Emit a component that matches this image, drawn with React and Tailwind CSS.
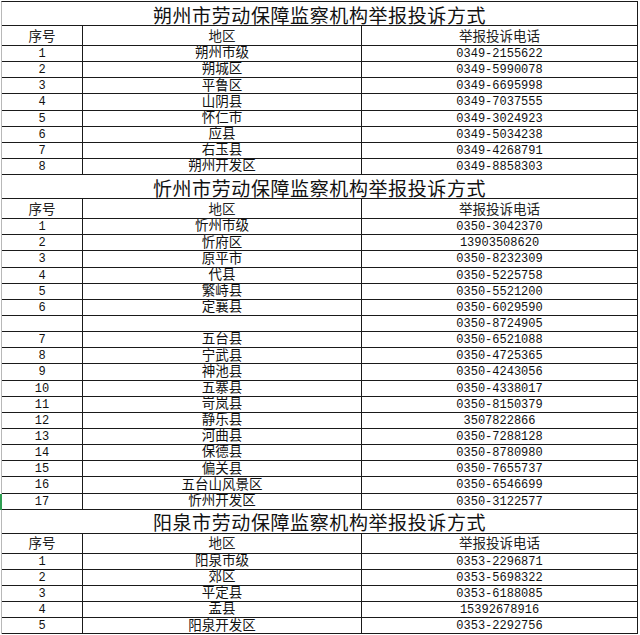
const sections = [
  {
    title: "朔州市劳动保障监察机构举报投诉方式",
    rows: [
      ["1", "朔州市级", "0349-2155622"],
      ["2", "朔城区", "0349-5990078"],
      ["3", "平鲁区", "0349-6695998"],
      ["4", "山阴县", "0349-7037555"],
      ["5", "怀仁市", "0349-3024923"],
      ["6", "应县", "0349-5034238"],
      ["7", "右玉县", "0349-4268791"],
      ["8", "朔州开发区", "0349-8858303"],
    ],
  },
  {
    title: "忻州市劳动保障监察机构举报投诉方式",
    rows: [
      ["1", "忻州市级", "0350-3042370"],
      ["2", "忻府区", "13903508620"],
      ["3", "原平市", "0350-8232309"],
      ["4", "代县", "0350-5225758"],
      ["5", "繁峙县", "0350-5521200"],
      ["6", "定襄县", "0350-6029590"],
      ["", "", "0350-8724905"],
      ["7", "五台县", "0350-6521088"],
      ["8", "宁武县", "0350-4725365"],
      ["9", "神池县", "0350-4243056"],
      ["10", "五寨县", "0350-4338017"],
      ["11", "岢岚县", "0350-8150379"],
      ["12", "静乐县", "3507822866"],
      ["13", "河曲县", "0350-7288128"],
      ["14", "保德县", "0350-8780980"],
      ["15", "偏关县", "0350-7655737"],
      ["16", "五台山风景区", "0350-6546699"],
      ["17", "忻州开发区", "0350-3122577", true],
    ],
  },
  {
    title: "阳泉市劳动保障监察机构举报投诉方式",
    rows: [
      ["1", "阳泉市级", "0353-2296871"],
      ["2", "郊区", "0353-5698322"],
      ["3", "平定县", "0353-6188085"],
      ["4", "盂县", "15392678916"],
      ["5", "阳泉开发区", "0353-2292756"],
    ],
  },
];

const cell =
  "flex items-center justify-center border-r border-[#1a1a1a] overflow-hidden whitespace-nowrap";

function Section({ title, rows }) {
  return (
    <div>
      {/* merged title row */}
      <div className="h-[24px] border-b border-r border-[#1a1a1a] flex items-center justify-center pt-[1px]">
        <span className="text-[19px] leading-none tracking-[0.6px] font-normal text-[#111] font-['Noto_Sans_CJK_SC',sans-serif]">
          {title}
        </span>
      </div>
      {/* header */}
      <div className="h-[20px] grid grid-cols-[81px_279px_276px] border-b border-[#1a1a1a] text-[13.5px] leading-none text-[#222] font-['Noto_Sans_CJK_SC',sans-serif]">
        <div className={cell}>序号</div>
        <div className={cell}>地区</div>
        <div className={cell}>举报投诉电话</div>
      </div>
      {rows.map((r, i) => (
        <div
          key={i}
          className={
            "h-[16.15px] grid grid-cols-[81px_279px_276px] border-b border-[#1a1a1a] text-[12px] leading-none text-[#111] font-['Liberation_Mono','Noto_Sans_CJK_SC',monospace] " +
            (r[3] ? "shadow-[-2px_0_0_#2f9e52]" : "")
          }
        >
          <div className={cell + " pt-[1px]"}>{r[0]}</div>
          <div className={cell + " pt-[1px] text-[13.5px]"}>{r[1]}</div>
          <div className={cell + " pt-[1px]"}>{r[2]}</div>
        </div>
      ))}
    </div>
  );
}

export default function App() {
  return (
    <div className="w-[640px] h-[635px] bg-white overflow-hidden">
      <div className="ml-[1px] w-[637px] border-l border-[#b8b8b8] border-t border-t-[#1a1a1a] mt-[1px]">
        {sections.map((s) => (
          <Section key={s.title} title={s.title} rows={s.rows} />
        ))}
      </div>
    </div>
  );
}
